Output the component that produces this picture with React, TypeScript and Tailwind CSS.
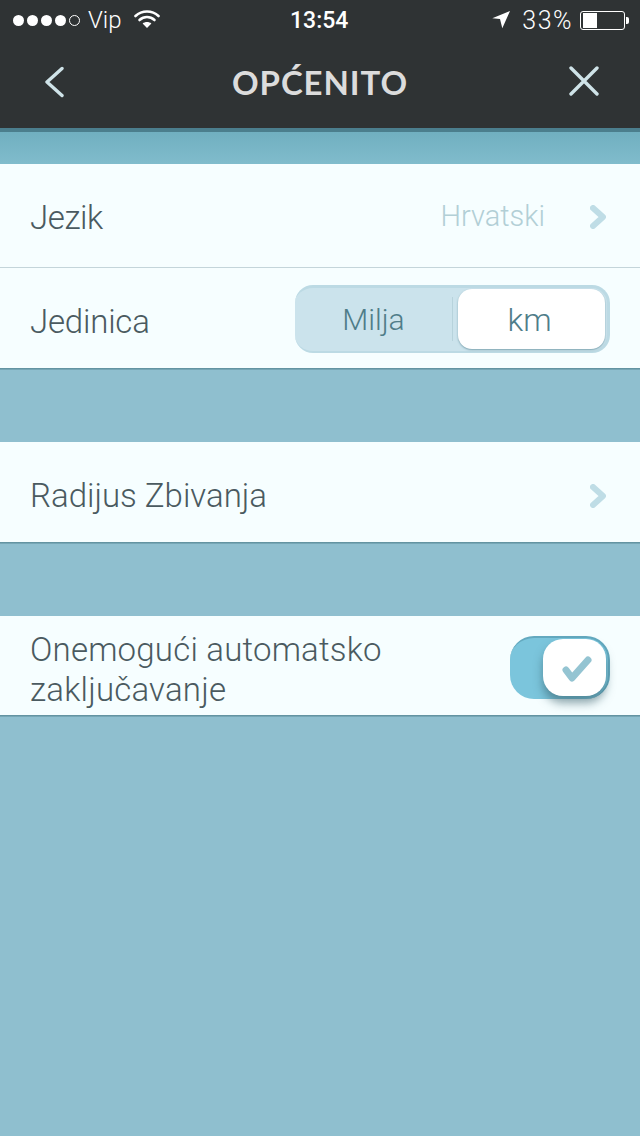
import React from "react";

const body = "font-['Roboto','Liberation_Sans',sans-serif] font-light";

function Chevron({ className = "" }: { className?: string }) {
  return (
    <svg width="16" height="24" viewBox="0 0 16 24" className={`block ${className}`}>
      <path d="M3 3 L13 12 L3 21" fill="none" stroke="#bfdde6" strokeWidth="6" strokeLinecap="round" strokeLinejoin="round" />
    </svg>
  );
}

function StatusBar() {
  return (
    <div className="relative flex h-10 items-center justify-between pl-[13px] pr-[11px] text-white">
      <div className="flex items-center">
        <div className="flex items-center gap-[3px]">
          {[0, 1, 2, 3].map((i) => (
            <span key={i} className="block h-[11px] w-[11px] rounded-full bg-white" />
          ))}
          <span className="block h-[11px] w-[11px] rounded-full border border-white" />
        </div>
        <span className={`${body} ml-[8px] text-[24px] leading-none`}>Vip</span>
        <svg width="26" height="20" viewBox="0 0 26 20" className="ml-[12px] mb-[2px]">
          <path d="M1.5 7 C8 1 18 1 24.5 7" fill="none" stroke="#fff" strokeWidth="2.6" strokeLinecap="round" />
          <path d="M5.5 11 C10 7 16 7 20.5 11" fill="none" stroke="#fff" strokeWidth="2.6" strokeLinecap="round" />
          <path d="M13 19 L8.6 14.4 C11 12.4 15 12.4 17.4 14.4 Z" fill="#fff" />
        </svg>
      </div>
      <span className="absolute left-[290px] top-[8px] font-['Roboto',sans-serif] text-[23px] font-medium leading-[26px]">13:54</span>
      <div className="flex items-center">
        <svg width="20" height="20" viewBox="0 0 20 20">
          <path d="M1.3 8.3 L19 1 L11.3 18.3 L9 9 Z" fill="#fff" />
        </svg>
        <span className={`${body} ml-[11px] text-[25px] leading-none tracking-[1.5px]`}>33%</span>
        <div className="ml-[7px] flex items-center">
          <div className="h-[19px] w-[45px] rounded-[3px] border border-white p-[1px]">
            <div className="ml-[1px] h-full w-[14px] bg-white" />
          </div>
          <div className="ml-px h-[7px] w-[3px] rounded-r-[2px] bg-white" />
        </div>
      </div>
    </div>
  );
}

function NavBar() {
  return (
    <div className="flex h-[88px] items-start justify-between pl-[44px] pr-[41px] pt-[26px]">
      <svg width="20" height="32" viewBox="0 0 20 32">
        <path d="M18 2.5 L3 16 L18 29.5" fill="none" stroke="#cfe3e8" strokeWidth="3.4" strokeLinecap="round" strokeLinejoin="round" />
      </svg>
      <span className="absolute left-0 right-0 top-[60px] text-center font-['Lato',sans-serif] text-[33px] font-bold leading-[44px] tracking-[0.9px] text-[#dcdcdc]">
        OPĆENITO
      </span>
      <svg width="30" height="30" viewBox="0 0 30 30">
        <path d="M2 2 L28 28 M28 2 L2 28" fill="none" stroke="#cfe3e8" strokeWidth="3.4" strokeLinecap="round" />
      </svg>
    </div>
  );
}

function Row({ children, className = "" }: { children: React.ReactNode; className?: string }) {
  return <div className={`flex items-center justify-between bg-[#f6feff] pl-[30px] ${className}`}>{children}</div>;
}

const label = `${body} block text-[33px] leading-[40px] text-[#4a5a60]`;

export default function App() {
  return (
    <div className="relative flex h-[1136px] w-[640px] flex-col overflow-hidden bg-[#8fbfcf]">
      <div className="h-[132px] border-b-[4px] border-[#4b7e8d] bg-[#2f3334]">
        <StatusBar />
        <NavBar />
      </div>
      <div className="h-[32px] bg-gradient-to-b from-[#70afc0] to-[#80bccc]" />
      <Row className="h-[103px] pr-[34px]">
        <span className={`${label} pt-[4px] tracking-[-0.4px]`}>Jezik</span>
        <div className="flex items-center">
          <span className={`${body} pt-[3px] text-[29px] text-[#b2cfd6]`}>Hrvatski</span>
          <Chevron className="ml-[45px] mt-[3px]" />
        </div>
      </Row>
      <div className="h-px bg-[#c4d5da]" />
      <Row className="h-[100px] pr-[30px]">
        <span className={`${label} pt-[7px] tracking-[-0.2px]`}>Jedinica</span>
        <div className="mt-[2px] flex h-[68px] w-[315px] rounded-[18px] border-b-2 border-r-[3px] border-t-[3px] border-[#bcdae4] bg-[#cbe3ec] pb-[2px] pt-[1px]">
          <div className="flex w-[157px] items-center justify-center pt-[2px]">
            <span className={`${body} text-[30px] leading-none text-[#4f7d89]`}>Milja</span>
          </div>
          <div className="my-[8px] w-px bg-[#b7d3dc]" />
          <div className="ml-[5px] flex w-[147px] items-center justify-center rounded-[14px] bg-white pr-[4px] pt-[2px] shadow-[0_1px_2px_rgba(70,120,135,0.6)]">
            <span className={`${body} text-[32px] leading-none text-[#4f7d89]`}>km</span>
          </div>
        </div>
      </Row>
      <div className="h-[2px] bg-gradient-to-b from-[#5a8a98] to-[#7fb0bf]" />
      <div className="h-[72px]" />
      <Row className="h-[100px] pr-[34px]">
        <span className={`${label} pt-[7px]`}>Radijus Zbivanja</span>
        <Chevron className="mt-[7px]" />
      </Row>
      <div className="h-[2px] bg-gradient-to-b from-[#5a8a98] to-[#7fb0bf]" />
      <div className="h-[72px]" />
      <Row className="h-[99px] pr-[30px]">
        <span className={`${label} pt-[8px] tracking-[0.2px]`}>
          Onemogući automatsko
          <br />
          zaključavanje
        </span>
        <div className="relative mt-[4px] h-[63px] w-[100px] rounded-[24px] border-r-2 border-t-2 border-[#63a9bf] bg-[#7bc5dc]">
          <div className="absolute right-[2px] top-px flex h-[57px] w-[63px] items-center justify-center rounded-[20px] bg-white pl-[4px] pt-[4px] shadow-[0_7px_10px_rgba(50,90,100,0.55)]">
            <svg width="30" height="28" viewBox="0 0 30 28">
              <path d="M4 14 L10 22 L26 4" fill="none" stroke="#94c4d2" strokeWidth="7" strokeLinecap="round" strokeLinejoin="round" />
            </svg>
          </div>
        </div>
      </Row>
      <div className="h-[2px] bg-gradient-to-b from-[#5a8a98] to-[#7fb0bf]" />
    </div>
  );
}
